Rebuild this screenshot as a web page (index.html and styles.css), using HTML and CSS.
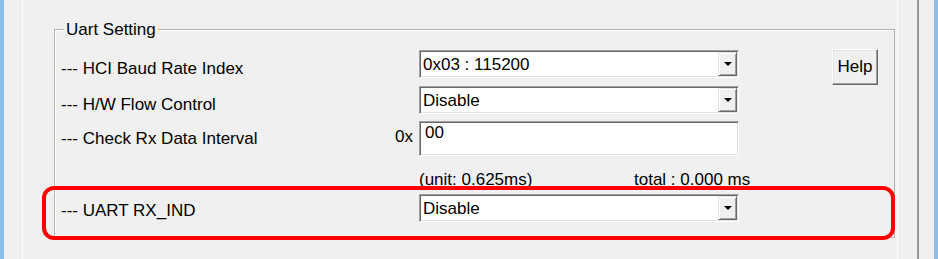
FILE: index.html
```html
<!DOCTYPE html>
<html>
<head>
<meta charset="utf-8">
<title>Uart Setting</title>
<link rel="stylesheet" href="styles.css">
</head>
<body>
<div class="window">
  <div class="edge"></div>
  <div class="gutter"></div>
  <div class="vline"></div>
  <main class="main">
    <section class="group">
      <span class="legend">Uart Setting</span>
      <div class="form">
        <div class="label">--- HCI Baud Rate Index</div>
        <div class="combo c3"><span class="value">0x03 : 115200</span><span class="drop"><i class="tri"></i></span></div>
        <div class="help-cell"><button class="help">Help</button></div>

        <div class="label">--- H/W Flow Control</div>
        <div class="combo c3"><span class="value">Disable</span><span class="drop"><i class="tri"></i></span></div>

        <div class="label lr3">--- Check Rx Data Interval</div>
        <div class="prefix">0x</div>
        <div class="field c3">00</div>

        <div class="unit">
          <span>(unit: 0.625ms)</span>
          <span>total : 0.000 ms</span>
        </div>

        <div class="label lr5">--- UART RX_IND</div>
        <div class="combo c3"><span class="value">Disable</span><span class="drop"><i class="tri"></i></span></div>
      </div>
    </section>
  </main>
  <div class="vline"></div>
  <div class="spacer-a"></div>
  <div class="sep"></div>
  <div class="spacer-b"></div>
  <div class="edge"></div>
</div>
<div class="highlight"></div>
</body>
</html>
```

FILE: styles.css
```css
html, body {
  margin: 0;
  padding: 0;
}
body {
  width: 938px;
  height: 259px;
  overflow: hidden;
  background: #f0f0f0;
  font-family: "Liberation Sans", Arial, sans-serif;
  font-size: 17px;
  color: #000;
  position: relative;
}
.window {
  display: flex;
  height: 259px;
}
.edge {
  width: 4px;
  background: #8bbde6;
}
.gutter {
  width: 18px;
}
.vline {
  width: 1px;
  background: #fcfcfc;
}
.main {
  width: 874px;
  padding-top: 29px;
  box-sizing: border-box;
}
.spacer-a {
  width: 19px;
}
.sep {
  width: 1px;
  background: #a0a0a0;
  border-right: 1px solid #8f8f8f;
}
.spacer-b {
  width: 15px;
}

.group {
  position: relative;
  margin-left: 31px;
  width: 841px;
  height: 209px;
  box-sizing: border-box;
  border: 1px solid #b4b4b4;
  box-shadow: inset 1px 1px 0 #ffffff;
}
.legend {
  position: absolute;
  top: -9px;
  left: 9px;
  padding: 0 2px;
  line-height: 18px;
  background: #f0f0f0;
}

.form {
  display: grid;
  grid-template-columns: 334px 24px 320px 93px 46px;
  grid-template-rows: 36px 35px 38px 35px 28px;
  margin-top: 20px;
  padding-left: 6px;
}
.label {
  grid-column: 1;
  line-height: 20px;
  margin-top: 9px;
  white-space: nowrap;
}
.label.lr3 {
  margin-top: 8px;
}
.label.lr5 {
  margin-top: 7px;
}
.c3 {
  grid-column: 3;
}
.prefix {
  grid-column: 2;
  line-height: 20px;
  margin-top: 6px;
  text-align: right;
  padding-right: 6px;
}

.combo {
  display: flex;
  height: 28px;
  box-sizing: border-box;
  background: #fff;
  border: 1px solid;
  border-color: #a0a0a0 #ffffff #ffffff #a0a0a0;
  box-shadow: inset 1px 1px 0 #696969, inset -1px -1px 0 #e3e3e3;
}
.combo .value {
  flex: 1;
  line-height: 20px;
  padding: 4px 0 0 3px;
  white-space: nowrap;
}
.drop {
  width: 19px;
  margin: 1px 1px 1px 0;
  box-sizing: border-box;
  background: #f0f0f0;
  border: 1px solid;
  border-color: #e3e3e3 #696969 #696969 #e3e3e3;
  box-shadow: inset 1px 1px 0 #ffffff, inset -1px -1px 0 #a0a0a0;
  display: flex;
  align-items: center;
  justify-content: center;
}
.tri {
  width: 0;
  height: 0;
  border-left: 4px solid transparent;
  border-right: 4px solid transparent;
  border-top: 4px solid #000;
}

.field {
  height: 35px;
  box-sizing: border-box;
  background: #fff;
  border: 1px solid;
  border-color: #a0a0a0 #ffffff #ffffff #a0a0a0;
  box-shadow: inset 1px 1px 0 #696969, inset -1px -1px 0 #e3e3e3;
  line-height: 17px;
  padding: 2px 0 0 5px;
}

.unit {
  grid-column: 3 / span 3;
  display: grid;
  grid-template-columns: 215px auto;
  line-height: 20px;
  margin-top: 11px;
  white-space: nowrap;
}

.help-cell {
  grid-column: 5;
  grid-row: 1 / span 2;
}
.help {
  display: block;
  width: 46px;
  height: 36px;
  margin-top: -1px;
  padding: 0;
  box-sizing: border-box;
  font-family: inherit;
  font-size: 17px;
  color: #000;
  background: #f0f0f0;
  border: 1px solid;
  border-color: #ffffff #696969 #696969 #ffffff;
  box-shadow: inset -1px -1px 0 #a0a0a0, inset 1px 1px 0 #e3e3e3;
}

.highlight {
  position: absolute;
  left: 42px;
  top: 186px;
  width: 853px;
  height: 54px;
  box-sizing: border-box;
  border: 4px solid #ff0000;
  border-radius: 12px;
}
```
